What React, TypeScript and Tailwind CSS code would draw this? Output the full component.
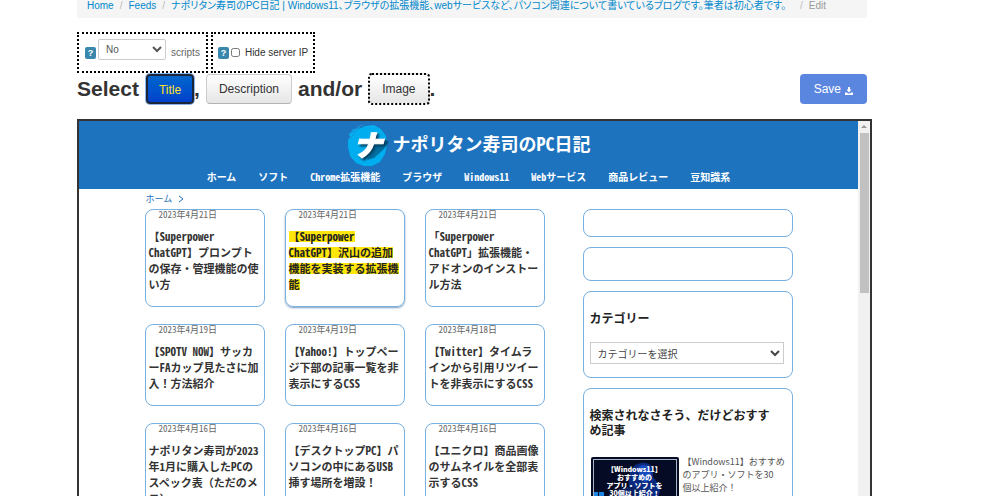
import React, {useState} from 'react';

interface Article {
    date: string;
    lines: string[];
    selected?: boolean;
}

const navItems = ['ホーム', 'ソフト', 'Chrome拡張機能', 'ブラウザ', 'Windows11', 'Webサービス', '商品レビュー', '豆知識系'];

const articles: Article[] = [
    {date: '2023年4月21日', lines: ['【Superpower', 'ChatGPT】プロンプト', 'の保存・管理機能の使', 'い方']},
    {date: '2023年4月21日', lines: ['【Superpower', 'ChatGPT】沢山の追加', '機能を実装する拡張機', '能'], selected: true},
    {date: '2023年4月21日', lines: ['「Superpower', 'ChatGPT」拡張機能・', 'アドオンのインストー', 'ル方法']},
    {date: '2023年4月19日', lines: ['【SPOTV NOW】サッカ', 'ーFAカップ見たさに加', '入！方法紹介']},
    {date: '2023年4月19日', lines: ['【Yahoo!】トップペー', 'ジ下部の記事一覧を非', '表示にするCSS']},
    {date: '2023年4月18日', lines: ['【Twitter】タイムラ', 'インから引用リツイー', 'トを非表示にするCSS']},
    {date: '2023年4月16日', lines: ['ナポリタン寿司が2023', '年1月に購入したPCの', 'スペック表（ただのメ', 'モ）']},
    {date: '2023年4月16日', lines: ['【デスクトップPC】パ', 'ソコンの中にあるUSB', '挿す場所を増設！']},
    {date: '2023年4月16日', lines: ['【ユニクロ】商品画像', 'のサムネイルを全部表', '示するCSS']},
];

function HelpBadge() {
    return (
        <button type="button" aria-label="Help" className="h-3 w-[11px] shrink-0 rounded-xs bg-[#3a87ad] text-center text-[9px] leading-3 font-bold text-white">
            ?
        </button>
    );
}

function SiteLogo() {
    return (
        <svg viewBox="0 0 42 44" className="h-11 w-[42px]" role="img" aria-label="ナ">
            <path
                d="M9 6l4-2-1 2 6-3 9-1 7 4 5 7 1 9-2 9-5 8-8 4-8 0-8-3-6-7-2-9 0-7 2-3-1-3 4-4-1-1z"
                fill="#00aeef"
            />
            <path d="M4 10l5-5M6 11l6-7M3 15l3-3M10 4l6-2" stroke="#1e8fd6" strokeWidth="1" />
            <path d="M20 37l7-2 9-8 6-8-6-4-6 6-4 8z" fill="#04547f" opacity="0.7" />
            <text
                x="6"
                y="33"
                fontSize="29"
                fontWeight="900"
                fontStyle="italic"
                fill="#fff"
                stroke="#fff"
                strokeWidth="1"
                style={{filter: 'drop-shadow(2px 2px 1px #033b5c)'}}
            >
                ナ
            </text>
        </svg>
    );
}

function SaveIcon() {
    return (
        <svg viewBox="0 0 16 16" className="mt-1 h-2 w-2" fill="currentColor" aria-hidden="true">
            <path d="M6 0h4v5h3l-5 6-5-6h3zM0 11h4l2 2h4l2-2h4v5H0z" />
        </svg>
    );
}

function ArticleCard({article}: {article: Article}) {
    // half-width forms only where the line has latin text, so ！ and （） stay full width
    const lineClass = (line: string) => (/[A-Za-z0-9]/.test(line) ? '' : '[font-feature-settings:normal]');

    return (
        <article className={`rounded-lg border border-[#78b0e0] px-[3px] pb-[14px] ${article.selected ? 'shadow-[0_1px_2px_#7c9cc0]' : ''}`}>
            <time className="block pl-[10px] text-[9px] leading-[9px] text-[#666]">{article.date}</time>
            <h3 className="mt-[9px] text-[11px] leading-4 font-bold whitespace-nowrap text-[#333]">
                {article.lines.map((line) => (
                    <span key={line} className={`flex h-4 items-center ${lineClass(line)}`}>
                        <span className={article.selected ? 'bg-[#ffe60a] leading-[11px] text-[#222]' : ''}>{line}</span>
                    </span>
                ))}
            </h3>
        </article>
    );
}

function Thumbnail() {
    return (
        <div className="relative h-[52px] w-[88px] shrink-0 overflow-hidden rounded-xs bg-[#050b24] p-0.5">
            <svg viewBox="0 0 88 52" className="absolute inset-0 h-full w-full" aria-hidden="true">
                <path d="M38 30Q36 8 50 6q14-2 12 14l8 10-6 22H30z" fill="#0a2a80" />
                <path d="M46 12q6-8 14 0 2 8-6 14z" fill="#164bc0" />
                <path d="M26 34q14-8 26 0l-8 18H28z" fill="#0c2260" />
                <path d="M2 35h5v5H2zM8 35h5v5H8zM2 41h5v5H2zM8 41h5v5H8z" fill="#1b84e0" />
            </svg>
            <div className="relative h-full border border-[#aab4c4] pt-[5px] text-center text-[7px] leading-2 font-black whitespace-nowrap text-white [font-feature-settings:normal]">
                <p>【Windows11】</p>
                <p>おすすめの</p>
                <p>アプリ・ソフトを</p>
                <p>30個以上紹介！</p>
            </div>
        </div>
    );
}

function SitePreview() {
    return (
        <div className="-mr-[5px] flex min-h-0 flex-1 border-2 border-b-0 border-[#333] font-['Noto_Sans_CJK_JP',sans-serif] [font-feature-settings:'hwid']">
            <div className="min-w-0 flex-1 overflow-hidden bg-white">
                <header className="h-[68px] bg-[#1e73be] text-white">
                    <div className="flex h-12 items-center justify-center gap-1">
                        <SiteLogo />
                        <h1 className="pb-1 text-[18px] leading-6 font-bold">ナポリタン寿司のPC日記</h1>
                    </div>
                    <nav className="flex justify-center gap-[22px] text-[10px] leading-4 font-bold">
                        {navItems.map((item) => (
                            <a key={item} href="#">{item}</a>
                        ))}
                    </nav>
                </header>
                <div className="mx-auto w-[648px]">
                    <p className="flex h-5 items-center gap-1.5 pl-px text-[9px] text-[#1e73be]">
                        <a href="#">ホーム</a>
                        <svg viewBox="0 0 6 8" className="h-2 w-1.5" fill="none" stroke="currentColor" aria-hidden="true">
                            <path d="M1 1l4 3-4 3" />
                        </svg>
                    </p>
                    <div className="flex items-start gap-[38px]">
                        <main className="grid flex-1 grid-cols-3 gap-x-5 gap-y-[17px]">
                            {articles.map((article) => (
                                <ArticleCard key={article.lines.join('')} article={article} />
                            ))}
                        </main>
                        <aside className="flex w-[210px] shrink-0 flex-col gap-[10px] text-[#222]">
                            <div className="h-7 rounded-lg border border-[#78b0e0]" />
                            <div className="h-[34px] rounded-lg border border-[#78b0e0]" />
                            <section className="rounded-lg border border-[#78b0e0] px-1.5 pt-[18px] pb-[13px]">
                                <h2 className="text-[12px] leading-4 font-bold">
                                    <label htmlFor="category">カテゴリー</label>
                                </h2>
                                <select id="category" className="mt-4 block h-[22px] w-[194px] border border-[#ccc] bg-white px-[3px] text-[10px] text-[#444]">
                                    <option>カテゴリーを選択</option>
                                </select>
                            </section>
                            <section className="rounded-lg border border-[#78b0e0] px-1.5 pt-[18px] pb-4">
                                <h2 className="text-[12px] leading-[15px] font-bold">
                                    検索されなさそう、だけどおすす<br />め記事
                                </h2>
                                <a href="#" className="mt-5 flex gap-1 pl-px text-[#555]">
                                    <Thumbnail />
                                    <p className="-mt-0.5 text-[9px] leading-[13px] whitespace-nowrap [font-feature-settings:normal]">
                                        【Windows11】おすすめ<br />のアプリ・ソフトを30<br />個以上紹介！
                                    </p>
                                </a>
                            </section>
                        </aside>
                    </div>
                </div>
            </div>
            <div className="flex w-3 flex-col items-center bg-[#f1f1f1]">
                <svg viewBox="0 0 12 12" className="h-3 w-3" fill="#999" aria-hidden="true">
                    <path d="M6 4l3 3H3z" />
                </svg>
                <div className="h-40 w-[9px] bg-[#c1c1c1]" />
            </div>
        </div>
    );
}

export default function App() {
    const [scripts, setScripts] = useState<string>('No');
    const [hideIp, setHideIp] = useState<boolean>(false);

    return (
        <div className="flex h-screen flex-col overflow-hidden bg-white pr-[133px] pl-[77px] font-['Liberation_Sans','Noto_Sans_CJK_JP',sans-serif] text-[#333]">
            <nav className="flex h-[18px] shrink-0 gap-1.5 rounded-b-xs bg-[#f5f5f5] px-[10px] text-[10px] leading-3 whitespace-nowrap text-[#0088cc] [font-feature-settings:'palt']">
                <a href="#">Home</a>
                <span className="text-[#bbb]">/</span>
                <a href="#">Feeds</a>
                <span className="text-[#bbb]">/</span>
                <a href="#">ナポリタン寿司のPC日記 | Windows11、ブラウザの拡張機能、webサービスなど、パソコン関連について書いているブログです。筆者は初心者です。</a>
                <span className="pl-2 text-[#bbb]">/</span>
                <span className="text-[#999]">Edit</span>
            </nav>

            <div className="mt-3.5 flex shrink-0 gap-[3px] text-[10px]">
                <div className="flex h-[41px] items-center gap-0.5 border-2 border-dotted border-black px-1.5">
                    <HelpBadge />
                    <select
                        id="scripts"
                        value={scripts}
                        onChange={(e) => setScripts(e.target.value)}
                        className="mb-1.5 h-[21px] w-[68px] rounded-xs border border-[#ccc] bg-white px-[3px] text-[#555]"
                    >
                        <option>No</option>
                        <option>Yes</option>
                    </select>
                    <label htmlFor="scripts" className="pl-[3px] text-[#666]">scripts</label>
                </div>
                <div className="flex h-[41px] items-center gap-0.5 border-2 border-dotted border-black px-[5px]">
                    <HelpBadge />
                    <input id="hide-ip" type="checkbox" checked={hideIp} onChange={(e) => setHideIp(e.target.checked)} className="h-[9px] w-[9px]" />
                    <label htmlFor="hide-ip" className="pl-[3px]">Hide server IP</label>
                </div>
            </div>

            <div className="flex h-8 shrink-0 items-center justify-between">
                <div className="flex items-center text-[21px] leading-7 font-bold whitespace-nowrap">
                    <span>Select</span>
                    <button type="button" className="ml-[7px] h-[30px] rounded-sm border-2 border-[#1b2638] bg-linear-to-b from-[#0066cc] to-[#0040cc] px-[11px] text-[12px] font-normal text-[#ffe02e] ring-1 ring-[#8ab4e8]">
                        Title
                    </button>
                    <span>,</span>
                    <button type="button" className="ml-1.5 h-[30px] rounded-sm border border-[#ccc] border-b-[#b3b3b3] bg-linear-to-b from-white to-[#e6e6e6] px-3 text-[12px] font-normal">
                        Description
                    </button>
                    <span className="ml-1.5">and/or</span>
                    <button type="button" className="ml-1.5 h-8 rounded-sm border-2 border-dotted border-black bg-linear-to-b from-white to-[#e6e6e6] px-3 text-[12px] font-normal">
                        Image
                    </button>
                    <span>.</span>
                </div>
                <button type="button" className="flex h-[30px] items-center gap-1 rounded-sm bg-[#5b86e0] px-[14px] text-[12px] text-white">
                    Save
                    <SaveIcon />
                </button>
            </div>

            <div className="mt-3.5 flex min-h-0 flex-1 flex-col">
                <SitePreview />
            </div>
        </div>
    );
}
